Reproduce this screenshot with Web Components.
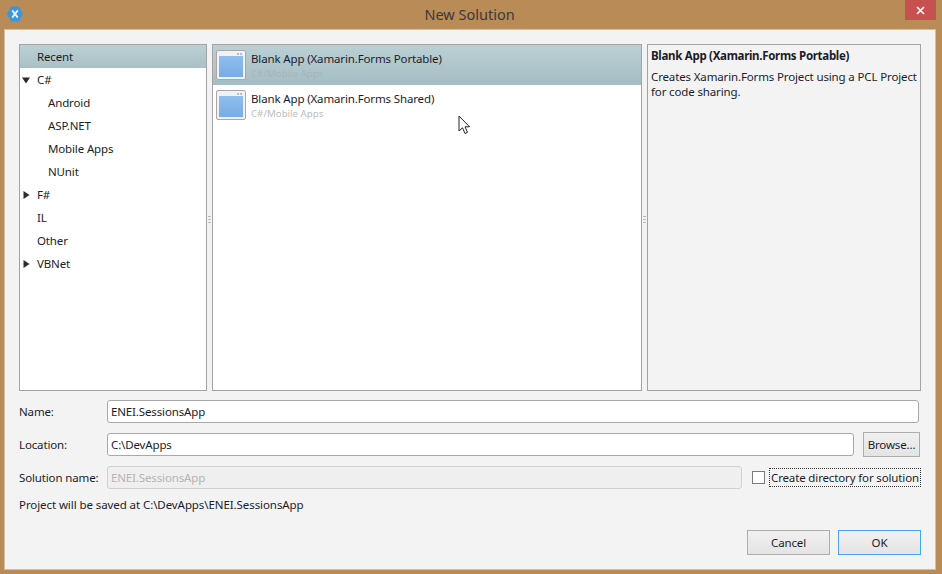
<!DOCTYPE html>
<html>
<head>
<meta charset="utf-8">
<style>
  html, body { margin: 0; padding: 0; }
  body { font: 11.5px "Noto Sans", sans-serif; letter-spacing: -.14px; color: #1e1e1e; }
</style>
</head>
<body>
<new-solution-dialog>
  <ui-panel slot="tree">
    <ui-tree-item selected>Recent</ui-tree-item>
    <ui-tree-item arrow="open">C#</ui-tree-item>
    <ui-tree-item child>Android</ui-tree-item>
    <ui-tree-item child>ASP.NET</ui-tree-item>
    <ui-tree-item child>Mobile Apps</ui-tree-item>
    <ui-tree-item child>NUnit</ui-tree-item>
    <ui-tree-item arrow="closed">F#</ui-tree-item>
    <ui-tree-item>IL</ui-tree-item>
    <ui-tree-item>Other</ui-tree-item>
    <ui-tree-item arrow="closed">VBNet</ui-tree-item>
  </ui-panel>
  <ui-panel slot="templates">
    <ui-template-item selected name="Blank App (Xamarin.Forms Portable)" path="C#/Mobile Apps"></ui-template-item>
    <ui-template-item name="Blank App (Xamarin.Forms Shared)" path="C#/Mobile Apps"></ui-template-item>
  </ui-panel>
  <ui-panel slot="description" muted>
    <ui-description title="Blank App (Xamarin.Forms Portable)">Creates Xamarin.Forms Project using a PCL Project for code sharing.</ui-description>
  </ui-panel>
</new-solution-dialog>

<script>
const panelTemplate = document.createElement('template');
panelTemplate.innerHTML = `
  <style>
    :host { display: block; box-sizing: border-box; height: 100%; background: #fff; border: 1px solid #a3a3a3; overflow: hidden; }
    :host([muted]) { background: #f3f3f3; }
  </style>
  <slot></slot>
`;
class UIPanel extends HTMLElement {
  constructor() {
    super();
    this.attachShadow({ mode: 'open' });
    this.shadowRoot.appendChild(panelTemplate.content.cloneNode(true));
  }
}
customElements.define('ui-panel', UIPanel);

const treeItemTemplate = document.createElement('template');
treeItemTemplate.innerHTML = `
  <style>
    :host { display: flex; align-items: center; height: 23px; padding-left: 17px; color: #1c1c2a; }
    :host([child]) { padding-left: 28px; }
    :host([selected]) { background: linear-gradient(#bdd1d5, #a8c0c6); }
    .arrow { position: absolute; width: 8px; height: 8px; margin-left: -15px; display: none; }
    :host([arrow]) .arrow { display: block; }
  </style>
  <svg class="arrow" viewBox="0 0 8 8"><path fill="#2b2b2b"></path></svg>
  <span><slot></slot></span>
`;
class UITreeItem extends HTMLElement {
  constructor() {
    super();
    this.attachShadow({ mode: 'open' });
    this.shadowRoot.appendChild(treeItemTemplate.content.cloneNode(true));
    const open = this.getAttribute('arrow') === 'open';
    this.shadowRoot.querySelector('path').setAttribute('d', open ? 'M0 1.5H8L4 7.5Z' : 'M1.5 0L7.5 4L1.5 8Z');
  }
}
customElements.define('ui-tree-item', UITreeItem);

const templateItemTemplate = document.createElement('template');
templateItemTemplate.innerHTML = `
  <style>
    :host { display: flex; align-items: center; gap: 5px; height: 40px; padding-left: 3px; }
    :host([selected]) { background: linear-gradient(#bbd0d4, #a4bdc3); }
    .icon { width: 30px; height: 30px; flex: none; }
    .text { display: flex; flex-direction: column; }
    .name { line-height: 15px; color: #1c1c2a; }
    .path { font-size: 9.7px; line-height: 13px; margin-top: 1px; color: #bdbdbd; letter-spacing: 0; }
    :host([selected]) .path { color: #a3b6bb; }
  </style>
  <svg class="icon" viewBox="0 0 30 30">
    <defs><linearGradient id="blue" x1="0" y1="0" x2="0" y2="1"><stop offset="0" stop-color="#8fbdee"></stop><stop offset="1" stop-color="#78ace6"></stop></linearGradient></defs>
    <rect x=".5" y=".5" width="29" height="29" rx="1.5" fill="#f2f2f2" stroke="#a8a8a8"></rect>
    <rect x="3" y="6" width="24" height="21" fill="url(#blue)"></rect>
    <rect x="21" y="3" width="2" height="2" fill="#bdbdbd"></rect>
    <rect x="24" y="3" width="2" height="2" fill="#bdbdbd"></rect>
  </svg>
  <div class="text"><span class="name"></span><span class="path"></span></div>
`;
class UITemplateItem extends HTMLElement {
  constructor() {
    super();
    this.attachShadow({ mode: 'open' });
    this.shadowRoot.appendChild(templateItemTemplate.content.cloneNode(true));
    this.shadowRoot.querySelector('.name').textContent = this.getAttribute('name');
    this.shadowRoot.querySelector('.path').textContent = this.getAttribute('path');
  }
}
customElements.define('ui-template-item', UITemplateItem);

const descriptionTemplate = document.createElement('template');
descriptionTemplate.innerHTML = `
  <style>
    :host { display: block; padding: 3px 0 0 3px; color: #1c1c2a; }
    .title { font-weight: 700; line-height: 15px; letter-spacing: -.3px; margin-bottom: 6px; }
    .body { line-height: 15px; }
  </style>
  <div class="title"></div>
  <div class="body"><slot></slot></div>
`;
class UIDescription extends HTMLElement {
  constructor() {
    super();
    this.attachShadow({ mode: 'open' });
    this.shadowRoot.appendChild(descriptionTemplate.content.cloneNode(true));
    this.shadowRoot.querySelector('.title').textContent = this.getAttribute('title');
  }
}
customElements.define('ui-description', UIDescription);

const buttonTemplate = document.createElement('template');
buttonTemplate.innerHTML = `
  <style>
    :host { display: flex; align-items: center; justify-content: center; box-sizing: border-box; height: 25px; background: linear-gradient(#f0f0f0, #e4e4e4); border: 1px solid #adadad; color: #1c1c2a; }
    :host([primary]) { border-color: #47a5f0; }
  </style>
  <slot></slot>
`;
class UIButton extends HTMLElement {
  constructor() {
    super();
    this.attachShadow({ mode: 'open' });
    this.shadowRoot.appendChild(buttonTemplate.content.cloneNode(true));
  }
}
customElements.define('ui-button', UIButton);

const inputTemplate = document.createElement('template');
inputTemplate.innerHTML = `
  <style>
    :host { display: flex; align-items: center; box-sizing: border-box; height: 23px; padding-left: 3px; background: #fff; border: 1px solid #a8a8a8; border-radius: 3px; color: #1c1c2a; }
    :host([disabled]) { background: #efefef; border-color: #d0d0d0; color: #b4b4b4; }
  </style>
  <slot></slot>
`;
class UIInput extends HTMLElement {
  constructor() {
    super();
    this.attachShadow({ mode: 'open' });
    this.shadowRoot.appendChild(inputTemplate.content.cloneNode(true));
  }
}
customElements.define('ui-input', UIInput);

const checkboxTemplate = document.createElement('template');
checkboxTemplate.innerHTML = `
  <style>
    :host { display: flex; align-items: center; gap: 4px; color: #1c1c2a; }
    .box { box-sizing: border-box; width: 13px; height: 13px; background: #fff; border: 1px solid #7a7a7a; flex: none; }
    .label { box-sizing: border-box; display: flex; align-items: center; height: 19px; width: 152px; padding-left: 1px; white-space: nowrap; border: 1px dotted #333; }
  </style>
  <span class="box"></span>
  <span class="label"><slot></slot></span>
`;
class UICheckbox extends HTMLElement {
  constructor() {
    super();
    this.attachShadow({ mode: 'open' });
    this.shadowRoot.appendChild(checkboxTemplate.content.cloneNode(true));
  }
}
customElements.define('ui-checkbox', UICheckbox);

const dialogTemplate = document.createElement('template');
dialogTemplate.innerHTML = `
  <style>
    :host { display: flex; flex-direction: column; position: relative; width: 942px; height: 574px; background: #b88b57; overflow: hidden; color: #1c1c2a; }
    .titlebar { display: flex; align-items: center; justify-content: center; box-sizing: border-box; height: 30px; padding: 0 3px 2px 0; flex: none; position: relative; font-size: 14.5px; letter-spacing: 0; color: #3a3a3a; }
    .app-icon { position: absolute; left: 7px; top: 6px; width: 16px; height: 16px; }
    .close { position: absolute; right: 6px; top: 0; width: 31px; height: 20px; background: #c75050; display: flex; align-items: center; justify-content: center; }
    .client { box-sizing: border-box; flex: 1; margin: 0 7px 5px 5px; padding: 14px 14px 14px; background: #f3f3f3; display: flex; flex-direction: column; box-shadow: 0 0 0 1px #d0bfa8; }
    .panes { display: grid; grid-template-columns: 188px 430px 274px; column-gap: 5px; height: 347px; flex: none; }
    .pane { position: relative; min-width: 0; }
    .grip { position: absolute; right: -4px; top: 172px; width: 3px; height: 7px; background: repeating-linear-gradient(#b8b8b8 0 1px, transparent 1px 3px); }
    .form { display: grid; grid-template-columns: 88px 1fr auto auto; grid-template-rows: 23px 23px 23px; row-gap: 10px; align-items: center; margin-top: 9px; }
    .form label { grid-column: 1; }
    .form .name { grid-column: 2 / 5; margin-right: 2px; }
    .form .location { grid-column: 2 / 4; margin-right: 9px; }
    .form .browse { grid-column: 4; width: 57px; margin-right: 1px; }
    .form .solution { grid-column: 2; }
    .form .check { grid-column: 3 / 5; margin-left: 10px; }
    .saved { margin-top: 8px; line-height: 16px; letter-spacing: -.08px; }
    .actions { display: flex; justify-content: flex-end; gap: 8px; margin-top: auto; }
    .actions ui-button { width: 83px; }
    .cursor { position: absolute; left: 458px; top: 115px; width: 13px; height: 20px; }
  </style>
  <div class="titlebar">
    <svg class="app-icon" viewBox="0 0 16 16">
      <path d="M4.4 1H11.6L15.5 8L11.6 15H4.4L.5 8Z" fill="#3a96dd" stroke="#3a96dd" stroke-linejoin="round"></path>
      <path d="M5.2 4.4L10.8 11.6M10.8 4.4L5.2 11.6" stroke="#e8f2fa" stroke-width="1.8" fill="none"></path>
    </svg>
    New Solution
    <div class="close">
      <svg width="9" height="9" viewBox="0 0 9 9"><path d="M1 1L8 8M8 1L1 8" stroke="#fff" stroke-width="1.6"></path></svg>
    </div>
  </div>
  <div class="client">
    <div class="panes">
      <div class="pane"><slot name="tree"></slot><div class="grip"></div></div>
      <div class="pane"><slot name="templates"></slot><div class="grip"></div></div>
      <div class="pane"><slot name="description"></slot></div>
    </div>
    <div class="form">
      <label>Name:</label>
      <ui-input class="name">ENEI.SessionsApp</ui-input>
      <label>Location:</label>
      <ui-input class="location">C:\\DevApps</ui-input>
      <ui-button class="browse">Browse...</ui-button>
      <label>Solution name:</label>
      <ui-input class="solution" disabled>ENEI.SessionsApp</ui-input>
      <ui-checkbox class="check">Create directory for solution</ui-checkbox>
    </div>
    <div class="saved">Project will be saved at C:\\DevApps\\ENEI.SessionsApp</div>
    <div class="actions">
      <ui-button>Cancel</ui-button>
      <ui-button primary>OK</ui-button>
    </div>
  </div>
  <svg class="cursor" viewBox="0 0 13 20">
    <path d="M1 1V16L4.5 12.8L7 18.5L9.5 17.4L7 11.8H11.5Z" fill="#fff" stroke="#222" stroke-width="1"></path>
  </svg>
`;
class NewSolutionDialog extends HTMLElement {
  constructor() {
    super();
    this.attachShadow({ mode: 'open' });
    this.shadowRoot.appendChild(dialogTemplate.content.cloneNode(true));
  }
}
customElements.define('new-solution-dialog', NewSolutionDialog);
</script>
</body>
</html>
